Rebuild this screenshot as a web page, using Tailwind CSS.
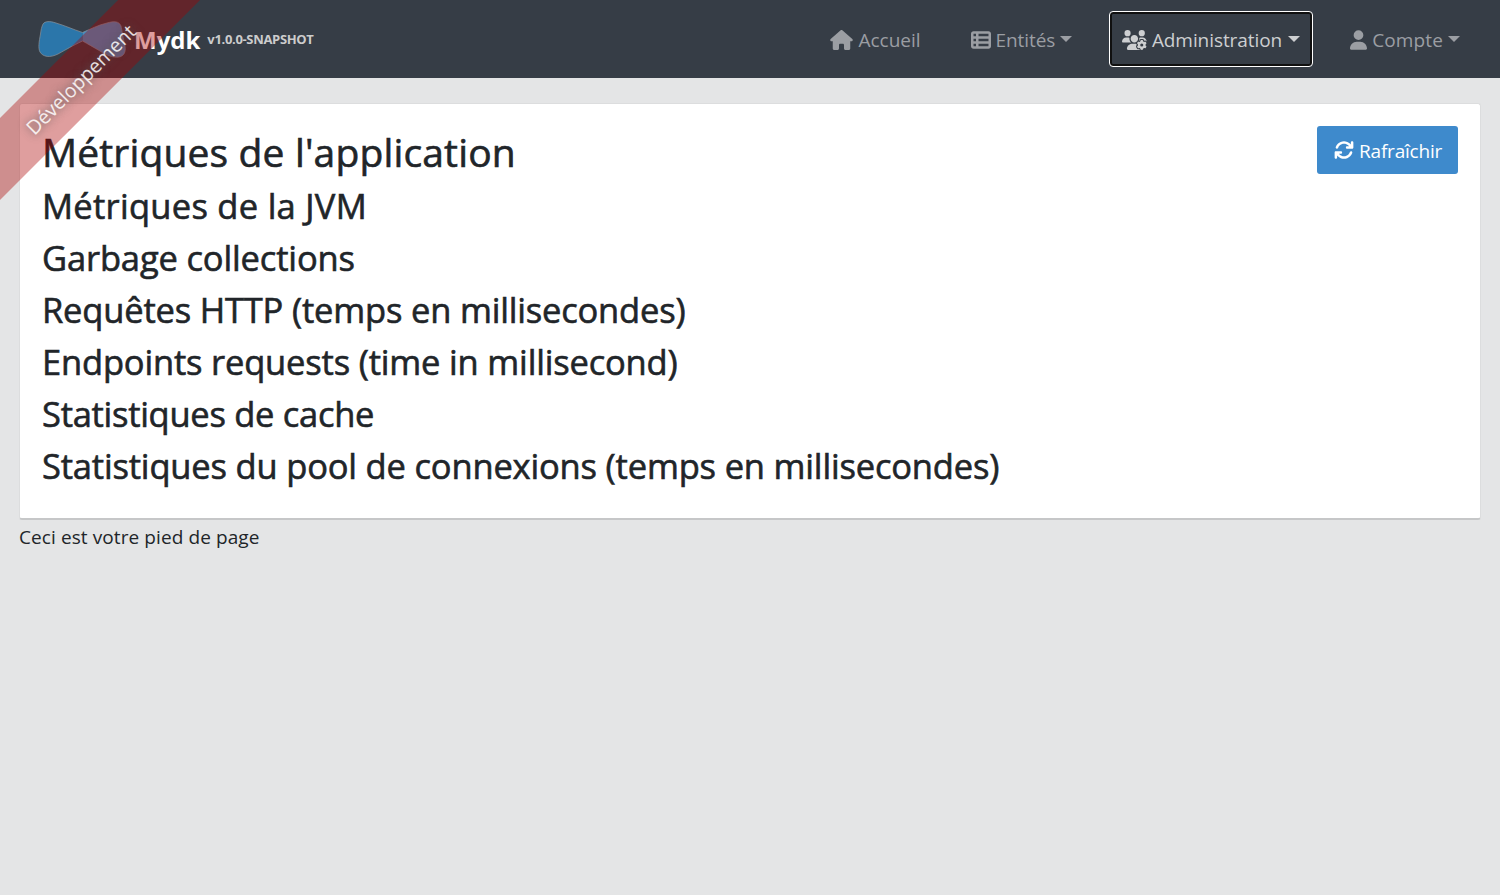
<!DOCTYPE html>
<html lang="fr">
<head>
<meta charset="utf-8">
<title>Mydk</title>
<script src="https://cdn.jsdelivr.net/npm/@tailwindcss/browser@4"></script>
</head>
<body class="relative min-h-screen overflow-x-hidden bg-[#e4e5e6] font-['Open_Sans','Noto_Sans',sans-serif] text-[19px] text-[#212529]">
<div class="pointer-events-none absolute left-[-70px] top-[50px] z-10 flex h-[57.6px] w-[300px] -rotate-45 items-center justify-center bg-[#aa0000]/38 pt-[2px] text-[19.5px] text-white/85 [text-shadow:0_0_8px_#555]"><span class="tracking-[0.02px]">Développement</span></div>

<nav class="flex h-[78px] items-center justify-between bg-[#363d46] pl-[38px] pr-[27px] pt-[2px]">
  <a class="flex items-center">
    <svg class="h-[40px] w-[90px]" viewBox="0 0 90 40"><g stroke="#8b9299" stroke-opacity=".7" stroke-width="1"><path fill="#2b76aa" d="M5 4C7 1 12 1 18 3C28 6 34 9 44.500 12.500V21C34 26 29 29 20 34C12 38 5 37 2 32C0 28 1 22 2.500 14C3 10 3.500 7 5 4Z" stroke="none"/><path fill="#4490c4" d="M44.500 12.500C53 9 60 5 69 3C76 1 81 1 83 6C84 10 85 18 87 26C88 32 86 36 81 37C75 38 68 35 62 31C55 27 50 24 44.500 21Z" stroke="none"/><path fill="none" d="M44.500 12.500C34 9 28 6 18 3C12 1 7 1 5 4C3.500 7 3 10 2.500 14C1 22 0 28 2 32C5 37 12 38 20 34C29 29 34 26 44.500 21C50 24 55 27 62 31C68 35 75 38 81 37C86 36 88 32 87 26C85 18 84 10 83 6C81 1 76 1 69 3C60 5 53 9 44.500 12.500Z"/></g></svg>
    <span class="ml-[6px] text-[24px] font-bold text-white">Mydk</span>
    <span class="ml-[7px] text-[13px] font-bold tracking-[-0.33px] text-[#ccc]">v1.0.0-SNAPSHOT</span>
  </a>
  <ul class="flex items-center text-[#9b9ea3]">
    <li class="flex items-center pr-[50px]"><svg class="mr-[5px] h-[20px] w-[23px]" viewBox="0 0 576 512" fill="currentColor"><path d="M575.8 255.5c0 18-15 32.1-32 32.1h-32l.7 160.2c0 2.7-.2 5.4-.5 8.1V472c0 22.1-17.9 40-40 40H392c-22.100 0-40-17.900-40-40V384c0-17.700-14.300-32-32-32H256c-17.700 0-32 14.300-32 32v88c0 22.100-17.900 40-40 40H104c-22.100 0-40-17.900-40-40V287.600H32c-18 0-32-14-32-32.100c0-9 3-17 10-24L266.400 8c7-7 15-8 22-8s15 2 21 7L564.800 231.500c8 7 12 15 11 24z"/></svg><span>Accueil</span></li>
    <li class="flex items-center pr-[37px]"><svg class="mr-[5px] size-[20px]" viewBox="0 0 512 512" fill="currentColor"><path d="M0 96C0 60.7 28.700 32 64 32H448c35.300 0 64 28.700 64 64V416c0 35.300-28.700 64-64 64H64c-35.300 0-64-28.700-64-64V96zm64 0v64h64V96H64zm384 0H192v64H448V96zM64 224v64h64V224H64zm384 0H192v64H448V224zM64 352v64h64V352H64zm384 0H192v64H448V352z"/></svg><span class="tracking-[-0.1px]">Entités</span><i class="ml-[5px] mt-[-3px] border-x-6 border-t-6 border-x-transparent border-t-current"></i></li>
    <li class="relative -top-px mr-[24px] flex h-[56px] w-[204px] items-center rounded-[4px] border border-white px-[12px] pt-[2px] text-[#cdcfd1] shadow-[inset_0_0_0_2px_#101010]"><svg class="mr-[5px] h-[20px] w-[25px]" viewBox="0 0 640 512" fill="currentColor"><path d="M144 160A80 80 0 1 0 144 0a80 80 0 1 0 0 160zm368 0A80 80 0 1 0 512 0a80 80 0 1 0 0 160zM0 298.7C0 310.4 9.6 320 21.3 320H234.7c.2 0 .4 0 .7 0c-26.6-23.5-43.3-57.8-43.3-96c0-7.6 .7-15 1.9-22.3c-13.6-6.3-28.7-9.7-44.6-9.7H106.7C47.8 192 0 239.8 0 298.7zM320 320c24 0 45.9-8.8 62.7-23.3c2.5-3.7 5.2-7.3 8-10.7c2.7-3.3 5.7-6.1 9-8.3C410 262.3 416 243.9 416 224c0-53-43-96-96-96s-96 43-96 96s43 96 96 96zm65.4 60.2c-10.3-5.9-18.1-16.2-20.8-28.2H261.3C187.7 352 128 411.7 128 485.3c0 14.7 11.9 26.7 26.7 26.7H455.2c-2.1-5.2-3.2-10.900-3.200-16.400v-3c-1.300-.700-2.700-1.500-4-2.300l-2.600 1.500c-16.800 9.700-40.500 8-54.700-9.700c-4.500-5.600-8.600-11.500-12.400-17.600l-.1-.2-.1-.2-2.400-4.100-.1-.2-.1-.2c-3.400-6.200-6.400-12.600-9-19.300c-8.200-21.200 2.200-42.600 19-52.300l2.700-1.500c0-.8 0-1.500 0-2.300s0-1.500 0-2.300l-2.700-1.500zM533.300 192H490.700c-15.900 0-31 3.500-44.600 9.700c1.300 7.200 1.900 14.700 1.900 22.300c0 17.400-3.500 33.900-9.700 49c2.500 .9 4.900 2 7.100 3.300l2.600 1.500c1.300-.8 2.600-1.600 4-2.300v-3c0-19.400 13.300-39.100 35.800-42.600c7.900-1.200 16-1.900 24.200-1.900s16.300 .6 24.200 1.900c22.500 3.500 35.800 23.200 35.800 42.600v3c1.300 .7 2.700 1.500 4 2.300l2.600-1.500c16.800-9.700 40.500-8 54.700 9.700c2.300 2.800 4.500 5.800 6.600 8.700c-2.100-57.100-49-102.700-106.600-102.700zm91.3 163.9c6.3-3.6 9.5-11.1 6.8-18c-2.1-5.5-4.6-10.8-7.4-15.9l-2.3-4c-3.1-5.1-6.5-9.9-10.2-14.5c-4.6-5.7-12.7-6.7-19-3l-2.900 1.700c-9.200 5.300-20.400 4-29.600-1.300s-16.100-14.500-16.100-25.100v-3.400c0-7.300-4.900-13.800-12.100-14.900c-6.500-1-13.100-1.500-19.900-1.500s-13.400 .5-19.900 1.500c-7.200 1.100-12.100 7.600-12.100 14.900v3.400c0 10.600-6.900 19.800-16.100 25.100s-20.400 6.600-29.600 1.300l-2.900-1.700c-6.300-3.600-14.400-2.600-19 3c-3.700 4.600-7.100 9.500-10.200 14.600l-2.300 3.900c-2.800 5.100-5.300 10.400-7.400 15.900c-2.600 6.800 .5 14.300 6.800 17.900l2.900 1.700c9.200 5.300 13.700 15.800 13.700 26.400s-4.500 21.100-13.700 26.400l-3 1.700c-6.300 3.600-9.500 11.100-6.800 17.900c2.100 5.500 4.600 10.700 7.400 15.800l2.400 4.100c3 5.100 6.400 9.900 10.100 14.500c4.600 5.700 12.700 6.700 19 3l2.900-1.700c9.200-5.300 20.400-4 29.600 1.300s16.100 14.500 16.100 25.100v3.400c0 7.300 4.900 13.800 12.100 14.900c6.500 1 13.100 1.500 19.900 1.500s13.400-.5 19.900-1.500c7.200-1.100 12.100-7.600 12.100-14.900v-3.400c0-10.600 6.900-19.800 16.100-25.100s20.400-6.600 29.600-1.300l2.900 1.700c6.300 3.600 14.400 2.600 19-3c3.700-4.600 7.100-9.400 10.100-14.500l2.400-4.200c2.800-5.100 5.300-10.300 7.400-15.800c2.600-6.800-.5-14.300-6.800-17.900l-3-1.700c-9.200-5.300-13.700-15.800-13.700-26.400s4.500-21.100 13.700-26.400l3-1.700zM472 384a40 40 0 1 1 80 0 40 40 0 1 1 -80 0z"/></svg><span class="tracking-[-0.071px]">Administration</span><i class="ml-[6px] mt-[-3px] border-x-6 border-t-6 border-x-transparent border-t-current"></i></li>
    <li class="flex items-center px-[13px]"><svg class="mr-[5px] h-[20px] w-[17px]" viewBox="0 0 448 512" fill="currentColor"><path d="M224 256A128 128 0 1 0 224 0a128 128 0 1 0 0 256zm-45.7 48C79.8 304 0 383.8 0 482.300C0 498.700 13.300 512 29.700 512H418.300c16.400 0 29.700-13.300 29.700-29.700C448 383.800 368.200 304 269.700 304H178.300z"/></svg><span class="tracking-[0.13px]">Compte</span><i class="ml-[5px] mt-[-3px] border-x-6 border-t-6 border-x-transparent border-t-current"></i></li>
  </ul>
</nav>

<main class="px-[19px] pt-[25px]">
  <section class="h-[417px] rounded-[3px] border border-[#dcddde] border-b-2 border-b-[#c6c7c8] bg-white px-[22px] pt-[22px] text-[34.5px]">
    <div class="mb-[5px] flex h-[49px] items-start justify-between">
      <h1 class="text-[39px] leading-[52px] tracking-[0.15px] [-webkit-text-stroke:0.6px_currentColor]">Métriques de l'application</h1>
      <button class="flex h-[48px] w-[141px] items-center rounded-[3px] bg-[#3e8acc] pl-[17px] pt-[2px] text-[19px] text-white"><svg class="mr-[5px] mt-[-3px] size-[20px]" viewBox="0 0 512 512" fill="currentColor"><path d="M105.1 202.6c7.7-21.8 20.2-42.3 37.8-59.8c62.5-62.5 163.8-62.5 226.3 0L386.3 160H336c-17.700 0-32 14.300-32 32s14.300 32 32 32H463.900c17.700 0 32-14.300 32-32V64c0-17.700-14.300-32-32-32s-32 14.300-32 32v51.200L414.400 97.600c-87.500-87.500-229.300-87.500-316.800 0C73.200 122 55.600 150.700 44.800 181.400c-5.900 16.700 2.900 34.900 19.500 40.800s34.900-2.900 40.800-19.500zM39 289.300c-5 1.500-9.800 4.200-13.700 8.200c-4 4-6.700 8.800-8.100 14c-.3 1.200-.6 2.500-.8 3.800c-.3 1.700-.4 3.400-.4 5.100V448c0 17.700 14.300 32 32 32s32-14.300 32-32V396.900l17.600 17.500c87.500 87.400 229.300 87.400 316.700 0c24.400-24.400 42.100-53.100 52.900-83.700c5.900-16.700-2.900-34.900-19.500-40.800s-34.900 2.900-40.800 19.500c-7.700 21.800-20.200 42.300-37.800 59.800c-62.500 62.500-163.800 62.500-226.300 0l-.1-.1L125.600 352H176c17.700 0 32-14.300 32-32s-14.300-32-32-32H48.400c-1.600 0-3.200 .1-4.800 .3s-3.100 .5-4.600 1z"/></svg><span class="tracking-[-0.2px]">Rafraîchir</span></button>
    </div>
    <div class="leading-[52px] [-webkit-text-stroke:0.6px_currentColor]">
      <h2 class="tracking-[0.28px]">Métriques de la JVM</h2>
      <h2 class="tracking-[-0.15px]">Garbage collections</h2>
      <h2 class="tracking-[-0.184px]">Requêtes HTTP (temps en millisecondes)</h2>
      <h2 class="tracking-[-0.18px]">Endpoints requests (time in millisecond)</h2>
      <h2 class="tracking-[-0.28px]">Statistiques de cache</h2>
      <h2 class="tracking-[-0.18px]">Statistiques du pool de connexions (temps en millisecondes)</h2>
    </div>
  </section>
  <footer class="leading-[34px] tracking-[0.09px]">Ceci est votre pied de page</footer>
</main>
</body>
</html>
